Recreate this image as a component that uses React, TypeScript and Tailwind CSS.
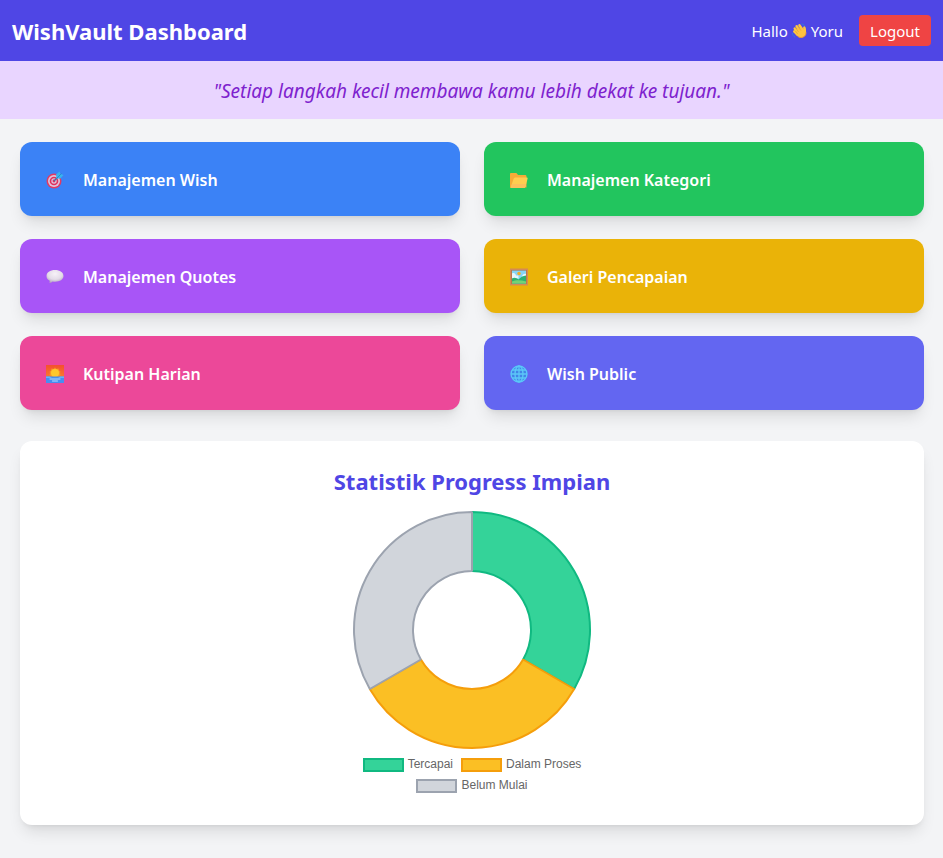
import type { ReactNode } from 'react';

function WaveIcon() {
  return (
    <svg viewBox="0 0 32 32" className="h-[15px] w-[15px]" aria-hidden="true">
      <g fill="none" stroke="#2f7fdb" strokeWidth="2" strokeLinecap="round">
        <path d="M21 2c4 1 6 3 7 7" />
        <path d="M1 22c0 4 2 6 5 8" />
      </g>
      <g stroke="#ffc83d" strokeLinecap="round" strokeWidth="5.500">
        <path d="M6 12l8 10" />
        <path d="M10 7l9 12" />
        <path d="M16 5l8 12" />
        <path d="M5 18l7 7" />
      </g>
      <path
        d="M6 19L12 12l9-1 3 2c-1-4 0-6 3-6 3 2 3 7 3 12 0 8-5 12-11 12-6 0-10-5-13-12z"
        fill="#ffc140"
      />
      <path d="M8 11l6 8M13 8l6 8M7 17l5 6" stroke="#e0982f" strokeWidth="1.2" fill="none" />
      <path d="M30 20c0 7-5 11-11 11-3 0-5-1-7-3" stroke="#ef9a37" strokeWidth="2" fill="none" />
    </svg>
  );
}

function TargetIcon() {
  return (
    <svg viewBox="0 0 36 36" className="h-[18px] w-[18px]" aria-hidden="true">
      <circle cx="16" cy="20" r="15" fill="#e23a62" />
      <circle cx="16" cy="20" r="12" fill="#dcc3dc" />
      <circle cx="16" cy="20" r="8.6" fill="#e0305c" />
      <circle cx="16" cy="20" r="5.4" fill="#dcc3dc" />
      <circle cx="16" cy="20" r="2.8" fill="#e0305c" />
      <path d="M16 20L27 9" stroke="#3d6fa8" strokeWidth="2.4" />
      <path d="M21 15l-1-8 7-6 2 5 6 2-6 7z" fill="#38b3ee" />
      <path d="M22 14L31 5" stroke="#1b83c4" strokeWidth="1.4" />
    </svg>
  );
}

function FolderIcon() {
  return (
    <svg viewBox="0 0 36 36" className="h-[18px] w-[18px]" aria-hidden="true">
      <path d="M0 6c0-1 1-2 2-2h10c2 0 3 4 5 4h13c2 0 3 1 3 3v22H2c-1 0-2 0-2-1z" fill="#f6ab38" />
      <path d="M11 13h22c2 0 3 1 2 3l-4 15c-1 2-2 3-4 3H1l6-18c1-2 2-3 4-3z" fill="#ffcd50" />
      <path d="M4 26l-3 8h26c2 0 3-1 4-3l1-5z" fill="#fcc05c" />
    </svg>
  );
}

function BubbleIcon() {
  return (
    <svg viewBox="0 0 36 36" className="h-[18px] w-[18px]" aria-hidden="true">
      <defs>
        <radialGradient id="bubble" cx="0.5" cy="0.3" r="0.7">
          <stop offset="0" stopColor="#f7f1f8" />
          <stop offset="0.6" stopColor="#e4dce8" />
          <stop offset="1" stopColor="#b5a4bf" />
        </radialGradient>
      </defs>
      <path
        d="M18 4C8 4 1 9 1 16c0 4 2 7 6 9 1 2 0 3 0 5 3 0 5-2 6-3 12 2 22-3 22-11C35 9 28 4 18 4z"
        fill="url(#bubble)"
      />
    </svg>
  );
}

function PictureIcon() {
  return (
    <svg viewBox="0 0 36 36" className="h-[18px] w-[18px]" aria-hidden="true">
      <rect x="0" y="1" width="36" height="34" fill="#d48a56" />
      <rect x="3" y="4" width="30" height="28" fill="#a8663d" />
      <rect x="4" y="5" width="28" height="26" fill="#86d4f5" />
      <path d="M4 11c4-2 7 0 8 4h5v6H4zM32 12c-4-1-7 1-8 5h8z" fill="#e7f5fc" />
      <circle cx="18" cy="11" r="3.500" fill="#f3aa28" />
      <path d="M4 21c5-3 9-1 13 2 4-5 9-7 15-8v16H4z" fill="#2eb171" />
      <path d="M4 27c8-4 18-3 28 0v4H4z" fill="#75d275" />
    </svg>
  );
}

function SunriseIcon() {
  return (
    <svg viewBox="0 0 36 36" className="h-[18px] w-[18px]" aria-hidden="true">
      <defs>
        <linearGradient id="dawn" x1="0" y1="0" x2="0" y2="1">
          <stop offset="0" stopColor="#f4502e" />
          <stop offset="1" stopColor="#fb7a2c" />
        </linearGradient>
      </defs>
      <rect x="0" y="0" width="36" height="25" fill="url(#dawn)" />
      <path
        d="M18 5l3 3 4-1 1 4 3 2-1 3 1 4-4 4H11l-4-4 1-4-1-3 3-2 1-4 4 1z"
        fill="#f99628"
      />
      <circle cx="18" cy="16" r="8" fill="#ffc82e" />
      <rect x="0" y="23" width="36" height="13" fill="#478ef2" />
      <path d="M0 23h8l4 3h12l4-3h8v3H0z" fill="#62b4fa" />
      <path d="M8 28h20M13 32h10" stroke="#b9dcff" strokeWidth="2" strokeLinecap="round" />
    </svg>
  );
}

function GlobeIcon() {
  return (
    <svg viewBox="0 0 36 36" className="h-[18px] w-[18px]" aria-hidden="true">
      <circle cx="18" cy="18" r="17" fill="#4285e8" />
      <g fill="none" stroke="#5cc8f8" strokeWidth="2.6">
        <circle cx="18" cy="18" r="16" />
        <ellipse cx="18" cy="18" rx="8" ry="16" />
        <path d="M18 2v32M2 18h32M4 10h28M4 26h28" />
      </g>
    </svg>
  );
}

type Tile = { label: string; color: string; icon: ReactNode };

const tiles: Tile[] = [
  { label: 'Manajemen Wish', color: 'bg-[#3b82f6]', icon: <TargetIcon /> },
  { label: 'Manajemen Kategori', color: 'bg-[#22c55e]', icon: <FolderIcon /> },
  { label: 'Manajemen Quotes', color: 'bg-[#a855f7]', icon: <BubbleIcon /> },
  { label: 'Galeri Pencapaian', color: 'bg-[#eab308]', icon: <PictureIcon /> },
  { label: 'Kutipan Harian', color: 'bg-[#ec4899]', icon: <SunriseIcon /> },
  { label: 'Wish Public', color: 'bg-[#6366f1]', icon: <GlobeIcon /> },
];

const slices = [
  { label: 'Tercapai', value: 1, fill: '#34d399', stroke: '#10b981', swatch: 'border-[#10b981] bg-[#34d399]' },
  { label: 'Dalam Proses', value: 1, fill: '#fbbf24', stroke: '#f59e0b', swatch: 'border-[#f59e0b] bg-[#fbbf24]' },
  { label: 'Belum Mulai', value: 1, fill: '#d1d5db', stroke: '#9ca3af', swatch: 'border-[#9ca3af] bg-[#d1d5db]' },
];

const CENTER = 120;
const OUTER = 118;
const INNER = 59;

function point(radius: number, turn: number) {
  const angle = turn * 2 * Math.PI - Math.PI / 2;
  return `${CENTER + radius * Math.cos(angle)} ${CENTER + radius * Math.sin(angle)}`;
}

function Doughnut() {
  const total = slices.reduce((sum, s) => sum + s.value, 0);
  let start = 0;
  return (
    <svg viewBox="0 0 240 240" className="h-60 w-60" role="img" aria-label="Statistik Progress Impian">
      {slices.map((s) => {
        const from = start;
        const to = start + s.value / total;
        start = to;
        const large = to - from > 0.5 ? 1 : 0;
        return (
          <path
            key={s.label}
            d={`M${point(OUTER, from)}A${OUTER} ${OUTER} 0 ${large} 1 ${point(OUTER, to)}L${point(INNER, to)}A${INNER} ${INNER} 0 ${large} 0 ${point(INNER, from)}Z`}
            fill={s.fill}
            stroke={s.stroke}
            strokeWidth="2"
            strokeLinejoin="bevel"
          />
        );
      })}
    </svg>
  );
}

export default function App() {
  return (
    <div className="min-h-screen bg-gray-100 font-['Segoe_UI','Noto_Sans',sans-serif]">
      <header className="flex h-[61px] items-center justify-between bg-[#4f46e5] px-3 text-white">
        <h1 className="text-[22px] leading-8 font-bold">WishVault Dashboard</h1>
        <div className="flex items-center gap-4 text-[15px] leading-6">
          <span className="flex items-center gap-1">
            Hallo <WaveIcon /> Yoru
          </span>
          <button type="button" className="flex h-[31px] items-center rounded bg-[#ef4444] px-[11px]">
            Logout
          </button>
        </div>
      </header>

      <p className="bg-[#e9d5ff] px-4 pt-4 pb-[14px] text-center text-[19px] leading-7 text-[#7e22ce] italic">
        "Setiap langkah kecil membawa kamu lebih dekat ke tujuan."
      </p>

      <main className="pt-[23px] pr-[19px] pb-8 pl-5">
        <nav className="grid grid-cols-2 gap-x-6 gap-y-[23px]">
          {tiles.map((tile) => (
            <a
              key={tile.label}
              href="#"
              className={`flex h-[74px] items-center gap-[19px] rounded-xl px-[26px] pt-px text-[16px] leading-7 font-semibold text-white shadow-lg ${tile.color}`}
            >
              {tile.icon}
              {tile.label}
            </a>
          ))}
        </nav>

        <section className="mt-[31px] flex flex-col items-center rounded-xl bg-white pt-6 pb-[29px] shadow-lg">
          <h2 className="text-[22px] leading-8 font-bold text-[#4f46e5]">Statistik Progress Impian</h2>
          <div className="mt-[13px]">
            <Doughnut />
          </div>
          <ul className="mt-1 flex w-60 flex-wrap justify-center gap-x-2 font-['Liberation_Sans',Arial,sans-serif] text-[12px] leading-[21px] text-[#666666]">
            {slices.map((s) => (
              <li key={s.label} className="flex items-center gap-1">
                <span className={`h-[14px] w-[41px] border-2 ${s.swatch}`} />
                {s.label}
              </li>
            ))}
          </ul>
        </section>
      </main>
    </div>
  );
}
